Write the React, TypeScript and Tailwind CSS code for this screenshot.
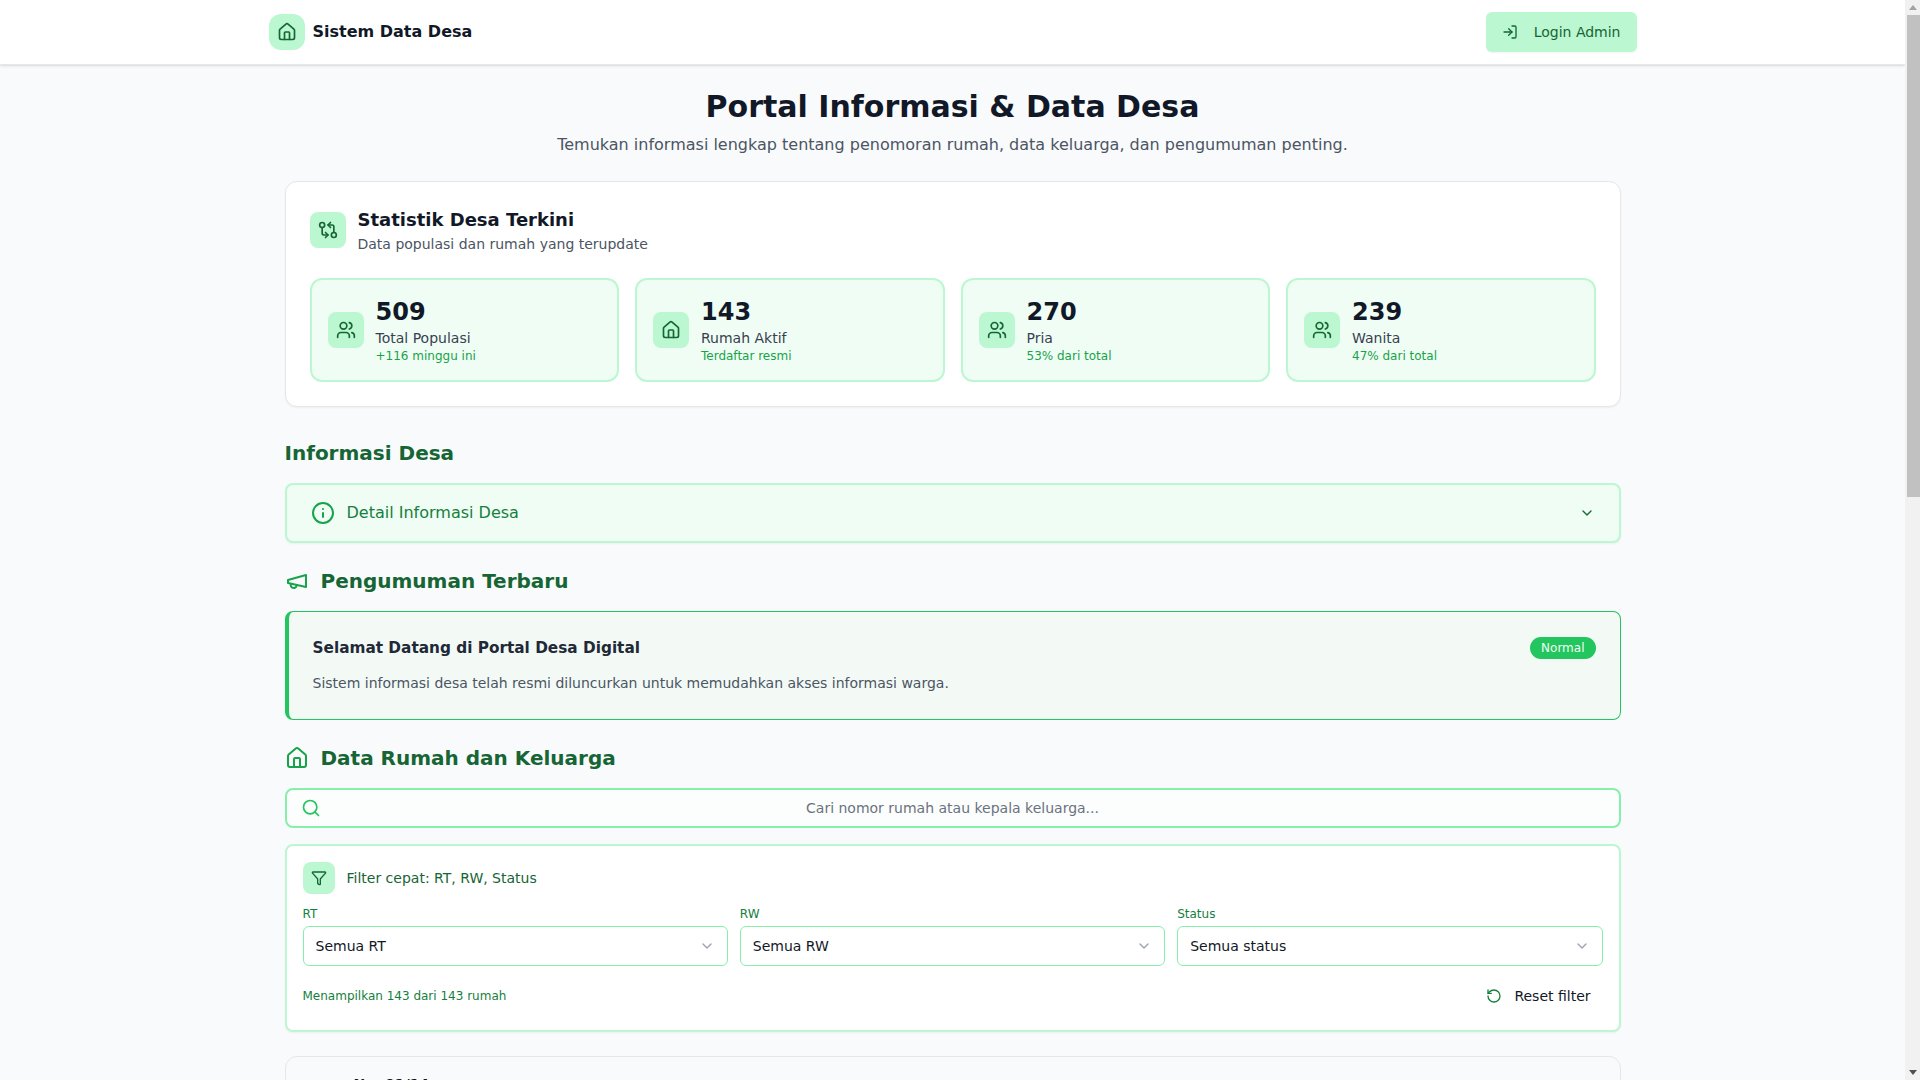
import React from 'react';
import { ChevronDown, Filter, GitCompareArrows, House, Info, LogIn, RotateCcw, Search, Users } from 'lucide-react';

const stats = [
  { value: '509', label: 'Total Populasi', note: '+116 minggu ini', icon: Users },
  { value: '143', label: 'Rumah Aktif', note: 'Terdaftar resmi', icon: House },
  { value: '270', label: 'Pria', note: '53% dari total', icon: Users },
  { value: '239', label: 'Wanita', note: '47% dari total', icon: Users },
];

const filters = [
  { label: 'RT', value: 'Semua RT' },
  { label: 'RW', value: 'Semua RW' },
  { label: 'Status', value: 'Semua status' },
];

const houses = ['01/14', '02/14', '03/14', '04/14', '05/14', '06/14', '07/14', '08/14'];

// older lucide megaphone, the current one in the package has a different horn
function MegaphoneIcon() {
  return (
    <svg viewBox="0 0 24 24" className="h-6 w-6 text-[#16a34a]" fill="none" stroke="currentColor" strokeWidth="2" strokeLinecap="round" strokeLinejoin="round">
      <path d="m3 11 18-5v12L3 14v-3z" />
      <path d="M11.6 16.8a3 3 0 1 1-5.8-1.6" />
    </svg>
  );
}

// headless browser hides the native scrollbar, so it is drawn over the page edge
function ScrollbarRail() {
  return (
    <div className="fixed top-0 right-0 flex h-screen w-[15px] flex-col justify-between bg-[#f1f1f1]">
      <div className="flex h-[15px] items-center justify-center">
        <svg viewBox="0 0 8 5" className="h-[5px] w-2 fill-[#a3a3a3]"><path d="M4 0 8 5H0z" /></svg>
      </div>
      <div className="absolute top-[15px] right-0 left-[2px] h-[482px] bg-[#c1c1c1]" />
      <div className="flex h-[15px] items-center justify-center">
        <svg viewBox="0 0 8 5" className="h-[5px] w-2 fill-[#505050]"><path d="M0 0h8L4 5z" /></svg>
      </div>
    </div>
  );
}

export default function App() {
  return (
    <div className="min-h-screen bg-[#f9fafb] pr-[15px] font-['DejaVu_Sans',sans-serif] text-[#111827]">
      <ScrollbarRail />
      <header className="h-[65px] border-b border-[#e5e7eb] bg-white shadow-sm">
        <div className="mx-auto flex h-16 max-w-[1400px] items-center justify-between px-4">
          <div className="flex items-center gap-2">
            <div className="flex h-9 w-9 items-center justify-center rounded-xl bg-[#bbf7d0]">
              <House className="h-5 w-5 text-[#166534]" />
            </div>
            <span className="text-base font-bold">Sistem Data Desa</span>
          </div>
          <button className="flex h-10 items-center gap-2 rounded-md bg-[#bbf7d0] px-4 text-sm text-[#166534] shadow-xs">
            <LogIn className="mr-2 h-4 w-4" />
            Login Admin
          </button>
        </div>
      </header>

      <main className="mx-auto max-w-[1400px] px-8 pt-6">
        <div className="mb-6 text-center">
          <h1 className="mb-2 text-3xl leading-9 font-bold">Portal Informasi &amp; Data Desa</h1>
          <p className="text-base leading-6 text-[#4b5563]">
            Temukan informasi lengkap tentang penomoran rumah, data keluarga, dan pengumuman penting.
          </p>
        </div>

        <section className="mb-8 rounded-xl border border-[#e5e7eb] bg-white p-6 shadow-xs">
          <div className="mb-6 flex items-center gap-3">
            <div className="flex h-9 w-9 items-center justify-center rounded-lg bg-[#bbf7d0]">
              <GitCompareArrows className="h-5 w-5 text-[#166534]" />
            </div>
            <div>
              <h2 className="text-lg leading-7 font-bold">Statistik Desa Terkini</h2>
              <p className="text-sm leading-5 text-[#4b5563]">Data populasi dan rumah yang terupdate</p>
            </div>
          </div>
          <div className="grid grid-cols-4 gap-4">
            {stats.map((s) => (
              <div key={s.label} className="flex items-center gap-3 rounded-xl border-2 border-[#bbf7d0] bg-[#f0fdf4] p-4">
                <div className="flex h-9 w-9 items-center justify-center rounded-lg bg-[#bbf7d0]">
                  <s.icon className="h-5 w-5 text-[#166534]" />
                </div>
                <div>
                  <div className="text-2xl leading-8 font-bold">{s.value}</div>
                  <div className="text-sm leading-5 text-[#374151]">{s.label}</div>
                  <div className="text-xs leading-4 text-[#16a34a]">{s.note}</div>
                </div>
              </div>
            ))}
          </div>
        </section>

        <h2 className="mb-4 text-xl leading-7 font-bold text-[#166534]">Informasi Desa</h2>
        <div className="mb-6 flex h-[60px] items-center justify-between rounded-lg border-2 border-[#bbf7d0] bg-[#f0fdf4] px-6 shadow-xs">
          <div className="flex items-center gap-3 text-base text-[#15803d]">
            <Info className="h-6 w-6 text-[#16a34a]" />
            Detail Informasi Desa
          </div>
          <ChevronDown className="h-4 w-4 text-[#166534]" />
        </div>

        <h2 className="mb-4 flex items-center gap-3 text-xl leading-7 font-bold text-[#166534]">
          <MegaphoneIcon />
          Pengumuman Terbaru
        </h2>
        <div className="mb-6 rounded-lg border border-l-4 border-[#22c55e] bg-[#f3faf6] p-6">
          <div className="mb-3 flex items-center justify-between">
            <h3 className="text-[15.3px] leading-6 font-bold text-[#1f2937]">Selamat Datang di Portal Desa Digital</h3>
            <span className="rounded-full bg-[#22c55e] px-[11px] py-[3px] text-xs leading-4 text-[#f0fdf4]">Normal</span>
          </div>
          <p className="text-sm leading-[23px] text-[#4b5563]">
            Sistem informasi desa telah resmi diluncurkan untuk memudahkan akses informasi warga.
          </p>
        </div>

        <h2 className="mb-4 flex items-center gap-3 text-xl leading-7 font-bold text-[#166534]">
          <House className="h-6 w-6 text-[#16a34a]" />
          Data Rumah dan Keluarga
        </h2>
        <div className="relative mb-4 flex h-10 items-center justify-center rounded-lg border-2 border-[#86efac] bg-[#fbfefc] text-sm text-[#6b7280]">
          <Search className="absolute top-2 left-3.5 h-5 w-5 text-[#22c55e]" />
          Cari nomor rumah atau kepala keluarga...
        </div>

        <section className="mb-6 rounded-lg border-2 border-[#bbf7d0] bg-white p-4 shadow-xs">
          <div className="mb-3 flex items-center gap-3">
            <div className="flex h-8 w-8 items-center justify-center rounded-lg bg-[#bbf7d0]">
              <Filter className="h-4 w-4 text-[#166534]" />
            </div>
            <span className="text-sm text-[#166534]">Filter cepat: RT, RW, Status</span>
          </div>
          <div className="grid grid-cols-3 gap-3">
            {filters.map((f) => (
              <div key={f.label}>
                <div className="mb-1 text-xs leading-4 text-[#15803d]">{f.label}</div>
                <div className="flex h-10 items-center justify-between rounded-md border border-[#86efac] bg-white px-3 text-sm text-[#111827]">
                  {f.value}
                  <ChevronDown className="h-4 w-4 text-[#9ca3af]" />
                </div>
              </div>
            ))}
          </div>
          <div className="mt-3 flex h-9 items-center justify-between">
            <span className="text-xs text-[#15803d]">Menampilkan 143 dari 143 rumah</span>
            <button className="flex h-9 items-center gap-2 px-3 text-sm">
              <RotateCcw className="mr-1 h-4 w-4 text-[#15803d]" />
              Reset filter
            </button>
          </div>
        </section>

        <div className="flex flex-col gap-4 pb-8">
          {houses.map((h) => (
            <div key={h} className="flex h-[140px] gap-3 rounded-xl border border-[#e5e7eb] bg-[#f9fafb] pt-[17px] pl-[68px]">
              <span className="text-sm font-bold">No. {h}</span>
            </div>
          ))}
        </div>
      </main>
    </div>
  );
}
